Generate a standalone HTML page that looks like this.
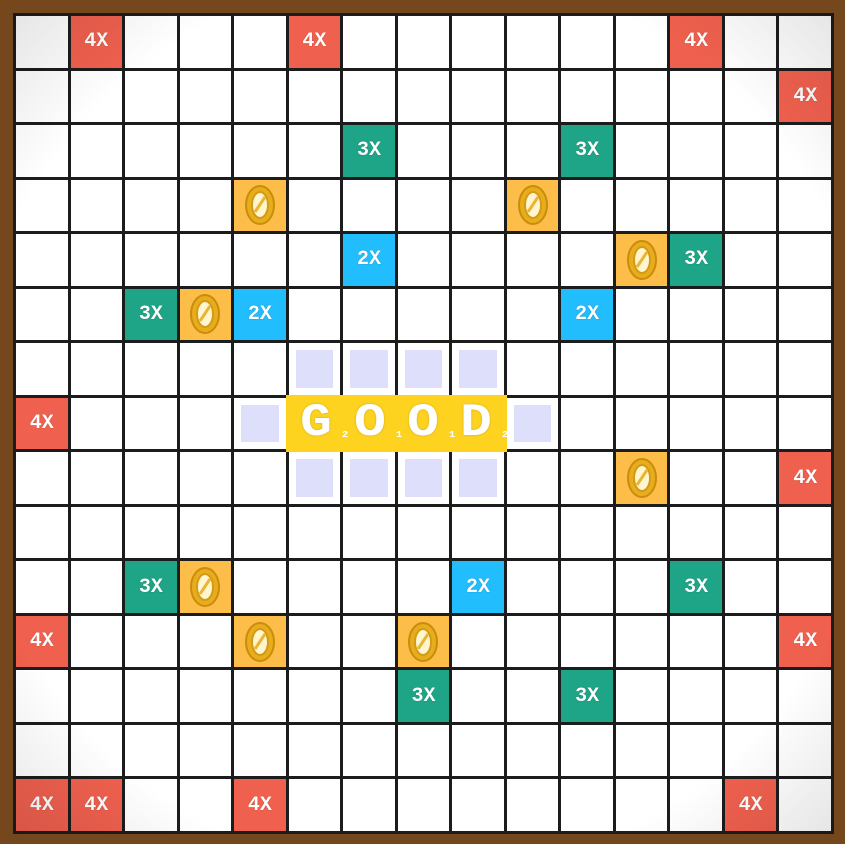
<!DOCTYPE html>
<html><head><style>
html,body{margin:0;padding:0;}
body{width:845px;height:844px;background:#74481c;position:relative;overflow:hidden;font-family:"Liberation Mono",monospace;}
.board{position:absolute;left:13px;top:13px;width:821px;height:821px;background:#1c1c1c;}
.g{position:absolute;left:0;top:0;width:815px;height:815px;padding:3px;display:grid;grid-template-columns:repeat(15,1fr);grid-template-rows:repeat(15,1fr);gap:3px;}
.g i{background:#fff;display:block;}
.s{display:flex;align-items:center;justify-content:center;color:#fff;font-weight:bold;font-size:20px;text-shadow:0 0 1px rgba(0,0,0,.35);}
.r{background:#f0604e;}
.t{background:#1ea486;}
.b{background:#22bdfd;}
.c{background:#fdbe49;}
.l{background:#fff;position:relative;}
.l::after{content:"";position:absolute;left:7px;top:7px;right:7px;bottom:7px;background:#dedffb;}
.good{grid-row:8;grid-column:6/10;margin:-3px;background:#fdd31f;display:flex;justify-content:space-around;align-items:center;padding:0 4px;}
.good span{position:relative;color:#fff;font-family:"Liberation Mono",monospace;font-weight:bold;font-size:46px;text-shadow:0 0 2px #c9a830;width:40px;text-align:center;line-height:44px;transform:scaleX(1.15);}
.good sub{position:absolute;right:-8px;bottom:-12px;font-size:9px;color:#fff;text-shadow:none;}
.vig{position:absolute;left:0;top:0;width:821px;height:821px;pointer-events:none;background:radial-gradient(ellipse farthest-corner at 50% 50%,rgba(0,0,0,0) 78%,rgba(0,0,0,.1) 100%);}
</style></head><body>
<div class="board">
<div class="g">
<i></i><i></i><i></i><i></i><i></i><i></i><i></i><i></i><i></i><i></i><i></i><i></i><i></i><i></i><i></i>
<i></i><i></i><i></i><i></i><i></i><i></i><i></i><i></i><i></i><i></i><i></i><i></i><i></i><i></i><i></i>
<i></i><i></i><i></i><i></i><i></i><i></i><i></i><i></i><i></i><i></i><i></i><i></i><i></i><i></i><i></i>
<i></i><i></i><i></i><i></i><i></i><i></i><i></i><i></i><i></i><i></i><i></i><i></i><i></i><i></i><i></i>
<i></i><i></i><i></i><i></i><i></i><i></i><i></i><i></i><i></i><i></i><i></i><i></i><i></i><i></i><i></i>
<i></i><i></i><i></i><i></i><i></i><i></i><i></i><i></i><i></i><i></i><i></i><i></i><i></i><i></i><i></i>
<i></i><i></i><i></i><i></i><i></i><i></i><i></i><i></i><i></i><i></i><i></i><i></i><i></i><i></i><i></i>
<i></i><i></i><i></i><i></i><i></i><i></i><i></i><i></i><i></i><i></i><i></i><i></i><i></i><i></i><i></i>
<i></i><i></i><i></i><i></i><i></i><i></i><i></i><i></i><i></i><i></i><i></i><i></i><i></i><i></i><i></i>
<i></i><i></i><i></i><i></i><i></i><i></i><i></i><i></i><i></i><i></i><i></i><i></i><i></i><i></i><i></i>
<i></i><i></i><i></i><i></i><i></i><i></i><i></i><i></i><i></i><i></i><i></i><i></i><i></i><i></i><i></i>
<i></i><i></i><i></i><i></i><i></i><i></i><i></i><i></i><i></i><i></i><i></i><i></i><i></i><i></i><i></i>
<i></i><i></i><i></i><i></i><i></i><i></i><i></i><i></i><i></i><i></i><i></i><i></i><i></i><i></i><i></i>
<i></i><i></i><i></i><i></i><i></i><i></i><i></i><i></i><i></i><i></i><i></i><i></i><i></i><i></i><i></i>
<i></i><i></i><i></i><i></i><i></i><i></i><i></i><i></i><i></i><i></i><i></i><i></i><i></i><i></i><i></i>
</div>
<div class="g">
<div class="s r" style="grid-area:1/2">4X</div>
<div class="s r" style="grid-area:1/6">4X</div>
<div class="s r" style="grid-area:1/13">4X</div>
<div class="s r" style="grid-area:2/15">4X</div>
<div class="s t" style="grid-area:3/7">3X</div>
<div class="s t" style="grid-area:3/11">3X</div>
<div class="s c" style="grid-area:4/5"><svg width="32" height="42" viewBox="0 0 32 42"><ellipse cx="16" cy="21" rx="14" ry="19" fill="#e8ad1c" stroke="#c98c0c" stroke-width="2"/><ellipse cx="16" cy="21" rx="8" ry="13" fill="#fff6d0" stroke="#d49a16" stroke-width="2"/><path d="M11 28 L21 13" stroke="#eab535" stroke-width="3"/></svg></div>
<div class="s c" style="grid-area:4/10"><svg width="32" height="42" viewBox="0 0 32 42"><ellipse cx="16" cy="21" rx="14" ry="19" fill="#e8ad1c" stroke="#c98c0c" stroke-width="2"/><ellipse cx="16" cy="21" rx="8" ry="13" fill="#fff6d0" stroke="#d49a16" stroke-width="2"/><path d="M11 28 L21 13" stroke="#eab535" stroke-width="3"/></svg></div>
<div class="s b" style="grid-area:5/7">2X</div>
<div class="s c" style="grid-area:5/12"><svg width="32" height="42" viewBox="0 0 32 42"><ellipse cx="16" cy="21" rx="14" ry="19" fill="#e8ad1c" stroke="#c98c0c" stroke-width="2"/><ellipse cx="16" cy="21" rx="8" ry="13" fill="#fff6d0" stroke="#d49a16" stroke-width="2"/><path d="M11 28 L21 13" stroke="#eab535" stroke-width="3"/></svg></div>
<div class="s t" style="grid-area:5/13">3X</div>
<div class="s t" style="grid-area:6/3">3X</div>
<div class="s c" style="grid-area:6/4"><svg width="32" height="42" viewBox="0 0 32 42"><ellipse cx="16" cy="21" rx="14" ry="19" fill="#e8ad1c" stroke="#c98c0c" stroke-width="2"/><ellipse cx="16" cy="21" rx="8" ry="13" fill="#fff6d0" stroke="#d49a16" stroke-width="2"/><path d="M11 28 L21 13" stroke="#eab535" stroke-width="3"/></svg></div>
<div class="s b" style="grid-area:6/5">2X</div>
<div class="s b" style="grid-area:6/11">2X</div>
<div class="l" style="grid-area:7/6"></div>
<div class="l" style="grid-area:7/7"></div>
<div class="l" style="grid-area:7/8"></div>
<div class="l" style="grid-area:7/9"></div>
<div class="s r" style="grid-area:8/1">4X</div>
<div class="l" style="grid-area:8/5"></div>
<div class="l" style="grid-area:8/10"></div>
<div class="l" style="grid-area:9/6"></div>
<div class="l" style="grid-area:9/7"></div>
<div class="l" style="grid-area:9/8"></div>
<div class="l" style="grid-area:9/9"></div>
<div class="s c" style="grid-area:9/12"><svg width="32" height="42" viewBox="0 0 32 42"><ellipse cx="16" cy="21" rx="14" ry="19" fill="#e8ad1c" stroke="#c98c0c" stroke-width="2"/><ellipse cx="16" cy="21" rx="8" ry="13" fill="#fff6d0" stroke="#d49a16" stroke-width="2"/><path d="M11 28 L21 13" stroke="#eab535" stroke-width="3"/></svg></div>
<div class="s r" style="grid-area:9/15">4X</div>
<div class="s t" style="grid-area:11/3">3X</div>
<div class="s c" style="grid-area:11/4"><svg width="32" height="42" viewBox="0 0 32 42"><ellipse cx="16" cy="21" rx="14" ry="19" fill="#e8ad1c" stroke="#c98c0c" stroke-width="2"/><ellipse cx="16" cy="21" rx="8" ry="13" fill="#fff6d0" stroke="#d49a16" stroke-width="2"/><path d="M11 28 L21 13" stroke="#eab535" stroke-width="3"/></svg></div>
<div class="s b" style="grid-area:11/9">2X</div>
<div class="s t" style="grid-area:11/13">3X</div>
<div class="s r" style="grid-area:12/1">4X</div>
<div class="s c" style="grid-area:12/5"><svg width="32" height="42" viewBox="0 0 32 42"><ellipse cx="16" cy="21" rx="14" ry="19" fill="#e8ad1c" stroke="#c98c0c" stroke-width="2"/><ellipse cx="16" cy="21" rx="8" ry="13" fill="#fff6d0" stroke="#d49a16" stroke-width="2"/><path d="M11 28 L21 13" stroke="#eab535" stroke-width="3"/></svg></div>
<div class="s c" style="grid-area:12/8"><svg width="32" height="42" viewBox="0 0 32 42"><ellipse cx="16" cy="21" rx="14" ry="19" fill="#e8ad1c" stroke="#c98c0c" stroke-width="2"/><ellipse cx="16" cy="21" rx="8" ry="13" fill="#fff6d0" stroke="#d49a16" stroke-width="2"/><path d="M11 28 L21 13" stroke="#eab535" stroke-width="3"/></svg></div>
<div class="s r" style="grid-area:12/15">4X</div>
<div class="s t" style="grid-area:13/8">3X</div>
<div class="s t" style="grid-area:13/11">3X</div>
<div class="s r" style="grid-area:15/1">4X</div>
<div class="s r" style="grid-area:15/2">4X</div>
<div class="s r" style="grid-area:15/5">4X</div>
<div class="s r" style="grid-area:15/14">4X</div>
<div class="good"><span>G<sub>2</sub></span><span>O<sub>1</sub></span><span>O<sub>1</sub></span><span>D<sub>2</sub></span></div>
</div>
<div class="vig"></div>
</div>
</body></html>
